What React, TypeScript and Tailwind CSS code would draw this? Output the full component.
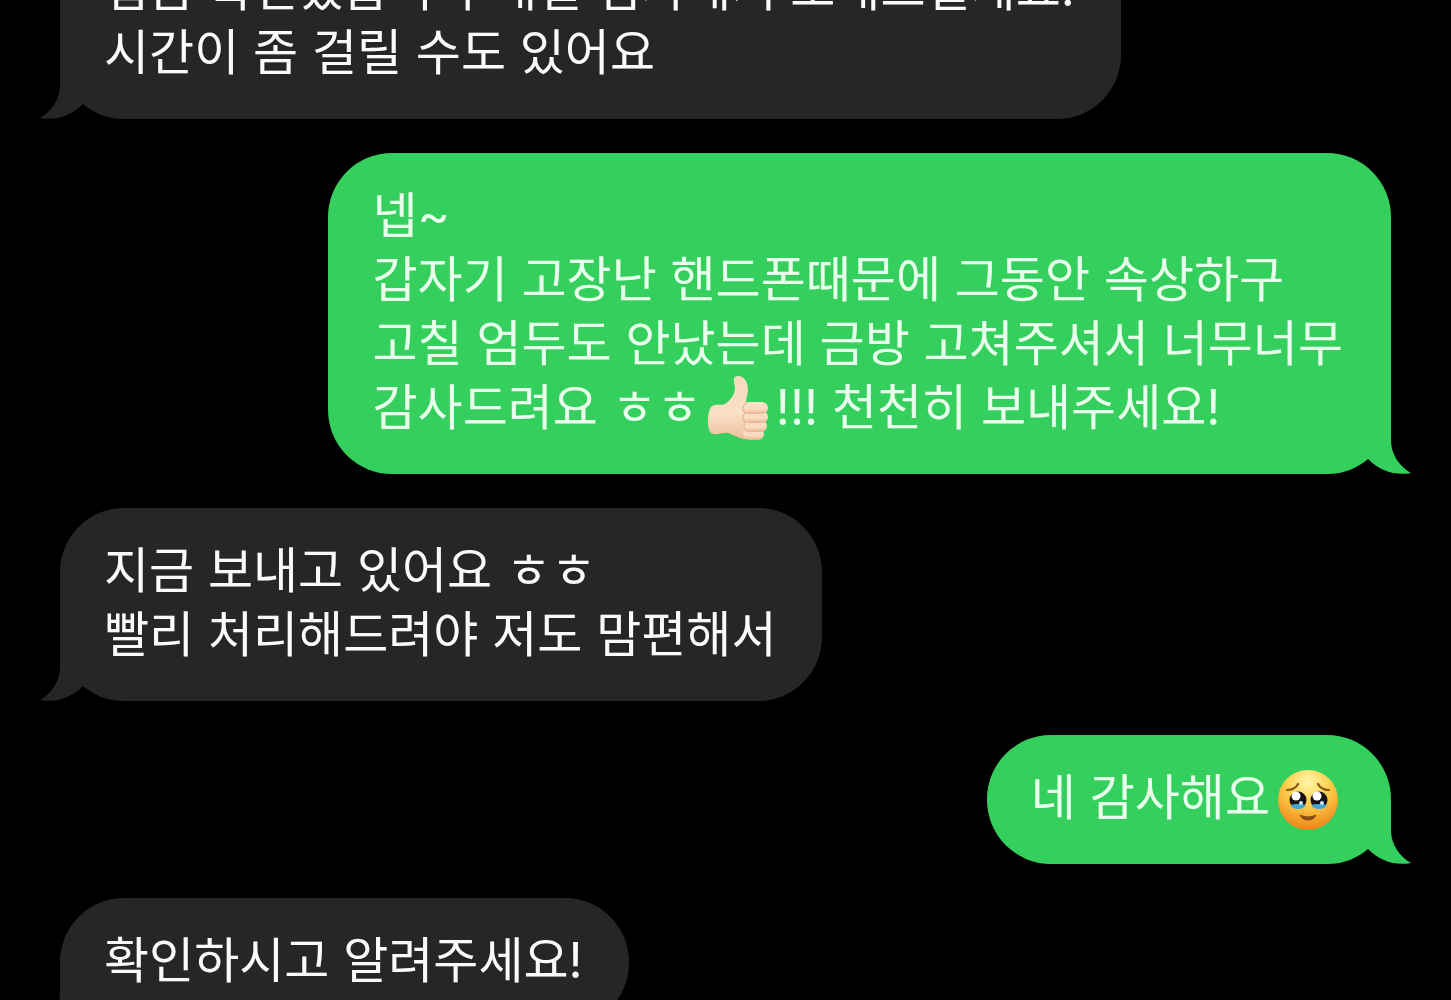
import type { ReactNode } from "react";

function Tail({ side }: { side: "left" | "right" }) {
  const place = side === "left" ? "-left-5 text-[#262628]" : "-right-5 -scale-x-100 text-[#34cf5c]";
  return (
    <svg className={"absolute bottom-0 h-[66px] w-[66px] " + place} viewBox="0 0 66 66" aria-hidden="true">
      <path d="M20 2V33C20 46 11 59 0 65C16 68 31 63 43 51L46 2Z" fill="currentColor" />
    </svg>
  );
}

function Bubble({ side, children }: { side: "left" | "right"; children: ReactNode }) {
  return (
    <li
      className={
        side === "left"
          ? "relative self-start rounded-[64px] bg-[#262628] pt-[31px] pr-[46px] pb-[34px] pl-[44px] text-[#fafafc]"
          : "relative self-end rounded-[64px] bg-[#34cf5c] pt-[31px] pr-[48px] pb-[34px] pl-[44px] text-[#e8ffec]"
      }
    >
      <p>{children}</p>
      <Tail side={side} />
    </li>
  );
}

function ThumbsUp() {
  return (
    <svg className="mx-[5px] -mt-4 -mb-2 inline-block h-[66px] w-[64px] align-middle" viewBox="0 0 64 66" role="img" aria-label="엄지척">
      <defs>
        <linearGradient id="skin" x1="0" y1="0" x2="0" y2="1">
          <stop offset="0" stopColor="#f6dcbc" />
          <stop offset="0.6" stopColor="#fae0c6" />
          <stop offset="1" stopColor="#efbf9d" />
        </linearGradient>
        <linearGradient id="finger" x1="0" y1="0" x2="0" y2="1">
          <stop offset="0" stopColor="#fce4cc" />
          <stop offset="0.65" stopColor="#f9d9bd" />
          <stop offset="1" stopColor="#e6b292" />
        </linearGradient>
      </defs>
      <path d="M4 32C8 28 13 31 18 29C24 25 28 19 28 13C27 6 25 1 31 1C38 1 41 8 41 16C40 21 39 24 39 28C46 30 48 60 42 64C34 65 27 60 21 58C14 57 7 62 3 57C0 51 0 39 4 32Z" fill="url(#skin)" />
      <rect x="36" y="53" width="21" height="12" rx="6" fill="url(#finger)" />
      <rect x="36" y="45" width="24" height="12" rx="6" fill="url(#finger)" />
      <rect x="35" y="36" width="26" height="12" rx="6" fill="url(#finger)" />
      <rect x="36" y="27" width="25" height="12" rx="6" fill="url(#finger)" />
      <path d="M39 28C35 31 35 36 38 38C35 41 35 45 38 47C36 51 37 54 39 56" fill="none" stroke="#dfac8a" strokeWidth="1" strokeLinecap="round" />
    </svg>
  );
}

function TearyFace() {
  return (
    <svg className="-mt-4 mr-[5px] -mb-3 ml-2 inline-block h-[60px] w-[60px] align-middle" viewBox="0 0 60 60" role="img" aria-label="울먹이는 얼굴">
      <defs>
        <radialGradient id="face" cx="0.5" cy="0.2" r="0.8">
          <stop offset="0" stopColor="#fff6a8" />
          <stop offset="0.5" stopColor="#fdcb46" />
          <stop offset="1" stopColor="#ee8418" />
        </radialGradient>
      </defs>
      <circle cx="30" cy="30" r="30" fill="url(#face)" />
      <path d="M9 20Q17 20 20 14M51 20Q43 20 40 14" fill="none" stroke="#8a5412" strokeWidth="2.2" strokeLinecap="round" />
      <circle cx="20" cy="30" r="8.500" fill="#17120f" />
      <path d="M12 35Q20 33 28 35Q26 39 20 39Q14 39 12 35Z" fill="#45a8d4" />
      <circle cx="18" cy="26" r="4.500" fill="#fff" />
      <circle cx="23" cy="33" r="2" fill="#c8ebff" />
      <circle cx="41" cy="30" r="8.500" fill="#17120f" />
      <path d="M33 35Q41 33 49 35Q47 39 41 39Q35 39 33 35Z" fill="#45a8d4" />
      <circle cx="39" cy="26" r="4.500" fill="#fff" />
      <circle cx="44" cy="33" r="2" fill="#c8ebff" />
      <path d="M22 45Q30 49 38 45Q36 50 30 50Q24 50 22 45Z" fill="#8a4a12" stroke="#8a4a12" strokeWidth="1" strokeLinejoin="round" />
    </svg>
  );
}

export default function App() {
  return (
    <main className="h-screen overflow-hidden bg-black font-[Inter,'Noto_Sans_CJK_KR',sans-serif] text-[49px] leading-[64px] font-normal">
      <ol className="-mt-[74px] flex flex-col gap-[34px] px-[60px]">
        <Bubble side="left">
          입금 확인했습니다 내일 검사해서 보내드릴게요!
          <br />
          시간이 좀 걸릴 수도 있어요
        </Bubble>
        <Bubble side="right">
          넵~
          <br />
          갑자기 고장난 핸드폰때문에 그동안 속상하구
          <br />
          고칠 엄두도 안났는데 금방 고쳐주셔서 너무너무
          <br />
          감사드려요 ㅎㅎ
          <ThumbsUp />
          !!! 천천히 보내주세요!
        </Bubble>
        <Bubble side="left">
          지금 보내고 있어요 ㅎㅎ
          <br />
          빨리 처리해드려야 저도 맘편해서
        </Bubble>
        <Bubble side="right">
          네 감사해요
          <TearyFace />
        </Bubble>
        <Bubble side="left">확인하시고 알려주세요!</Bubble>
      </ol>
    </main>
  );
}
